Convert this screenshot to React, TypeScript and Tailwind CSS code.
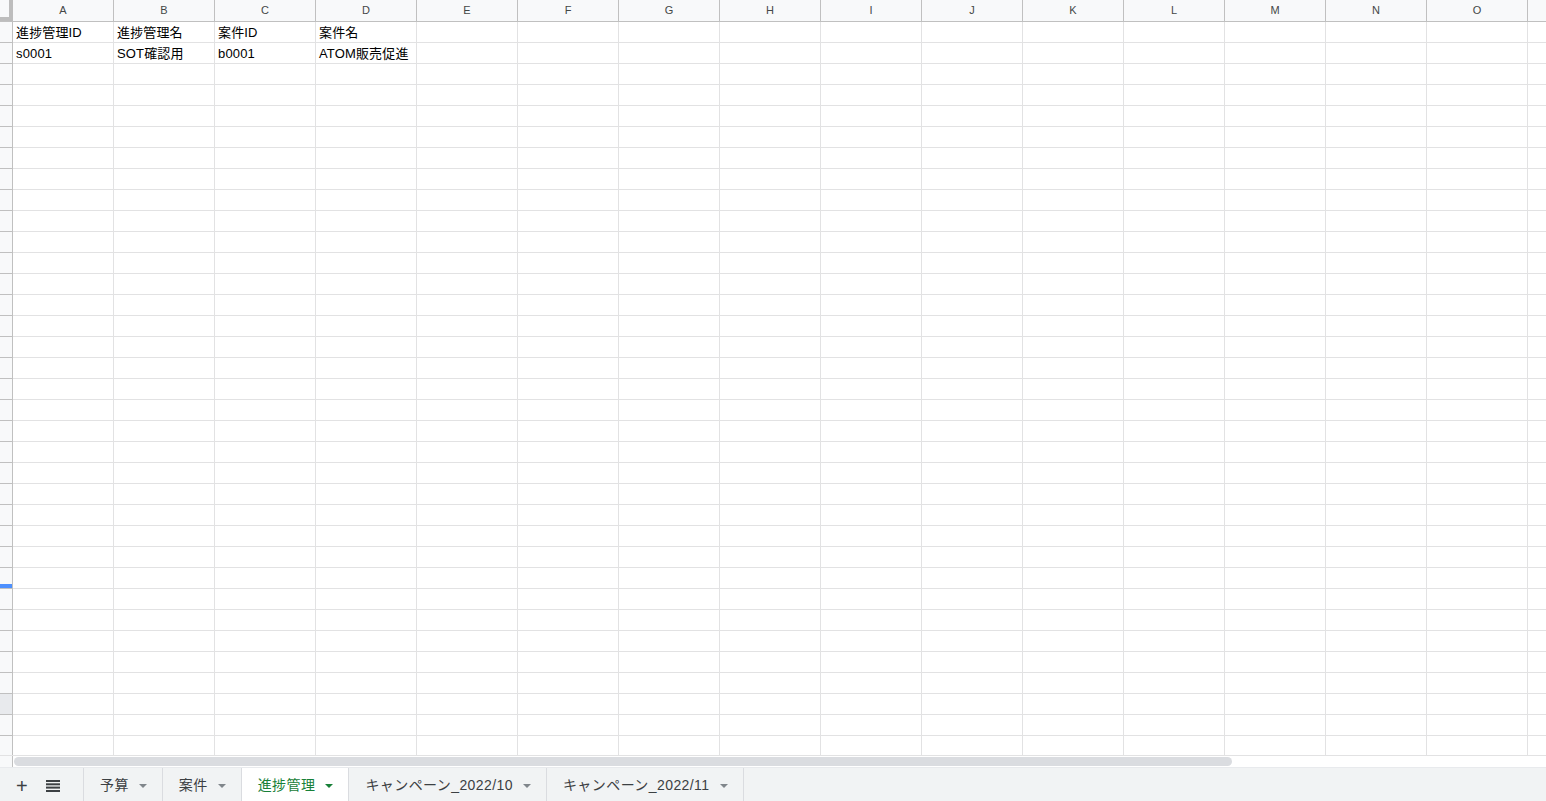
import React from "react";

const COLS = ["A","B","C","D","E","F","G","H","I","J","K","L","M","N","O"];
const ROWS = 35;
const data: Record<number, string[]> = {
  0: ["進捗管理ID", "進捗管理名", "案件ID", "案件名"],
  1: ["s0001", "SOT確認用", "b0001", "ATOM販売促進"],
};

function Caret({ green }: { green?: boolean }) {
  return (
    <span
      className={
        "inline-block w-0 h-0 border-l-[4px] border-r-[4px] border-t-[4px] border-l-transparent border-r-transparent " +
        (green ? "border-t-[#188038]" : "border-t-[#80868b]")
      }
    />
  );
}

function Tab({ label, active }: { label: string; active?: boolean }) {
  return (
    <div
      className={
        "h-full flex items-center gap-[10px] pl-4 pr-[15px] pt-[2px] border-r border-[#dadce0] text-[14px] tracking-[0.42px] " +
        (active ? "bg-white text-[#188038]" : "text-[#3c4043]")
      }
    >
      <span>{label}</span>
      <Caret green={active} />
    </div>
  );
}

export default function App() {
  return (
    <div
      className="w-[1546px] h-[801px] flex flex-col overflow-hidden bg-white"
      style={{ fontFamily: '"Liberation Sans", Arial, "Noto Sans CJK JP", sans-serif' }}
    >
      {/* column header */}
      <div className="flex h-[22px] shrink-0 bg-[#f8f9fa] border-b border-[#c0c0c0]">
        <div className="w-[13px] h-full shrink-0 flex flex-col">
          <div className="flex flex-1">
            <div className="w-[9px] bg-[#f8f9fa]" />
            <div className="w-[4px] bg-[#bdbdbd]" />
          </div>
          <div className="h-[4px] bg-[#bdbdbd]" />
        </div>
        {COLS.map((c) => (
          <div
            key={c}
            className="w-[101px] shrink-0 border-r border-[#c0c0c0] flex items-center justify-center text-[11px] text-[#444746]"
          >
            {c}
          </div>
        ))}
        <div className="flex-1" />
      </div>

      {/* grid body */}
      <div className="flex-1 overflow-hidden">
        {Array.from({ length: ROWS }).map((_, r) => (
          <div key={r} className="flex h-[21px]">
            <div
              className={
                "w-[13px] shrink-0 border-r border-[#c0c0c0] border-b border-b-[#c0c0c0] relative " +
                (r === 32 ? "bg-[#e8eaed]" : "bg-[#f8f9fa]")
              }
            >
              {r === 26 && (
                <div className="absolute left-0 bottom-[0px] w-[12px] h-[4px] bg-[#4d90fe]" />
              )}
            </div>
            {COLS.map((c, ci) => (
              <div
                key={c}
                className="w-[101px] shrink-0 border-r border-b border-[#e2e2e3] text-[13px] text-black pl-[3px] pt-[1px] leading-[19px] whitespace-nowrap overflow-hidden tracking-[0.15px]"
              >
                {data[r]?.[ci] ?? ""}
              </div>
            ))}
            <div className="flex-1 border-b border-[#e2e2e3]" />
          </div>
        ))}
      </div>

      {/* horizontal scrollbar */}
      <div className="flex h-[12px] shrink-0 border-t border-[#e2e2e3]">
        <div className="w-[13px] shrink-0 bg-[#f8f9fa] border-r border-[#c0c0c0]" />
        <div className="flex-1 flex items-center pl-[1px]">
          <div className="w-[1218px] h-[9px] rounded-full bg-[#dadce0]" />
        </div>
      </div>

      {/* sheet tabs */}
      <div className="flex h-[34px] shrink-0 bg-[#f1f3f4] border-t border-[#e8eaed] items-stretch">
        <div className="w-[84px] shrink-0 flex items-center border-r border-[#dadce0] pt-[2px]">
          <span className="ml-[16px] text-[20px] leading-none text-[#3c4043] font-light">+</span>
          <svg className="ml-[18px]" width="14" height="12" viewBox="0 0 14 12">
            <rect x="0" y="0" width="14" height="2" fill="#3c4043" />
            <rect x="0" y="3.3" width="14" height="2" fill="#3c4043" />
            <rect x="0" y="6.6" width="14" height="2" fill="#3c4043" />
            <rect x="0" y="10" width="14" height="2" fill="#3c4043" />
          </svg>
        </div>
        <Tab label="予算" />
        <Tab label="案件" />
        <Tab label="進捗管理" active />
        <Tab label="キャンペーン_2022/10" />
        <Tab label="キャンペーン_2022/11" />
      </div>
    </div>
  );
}
